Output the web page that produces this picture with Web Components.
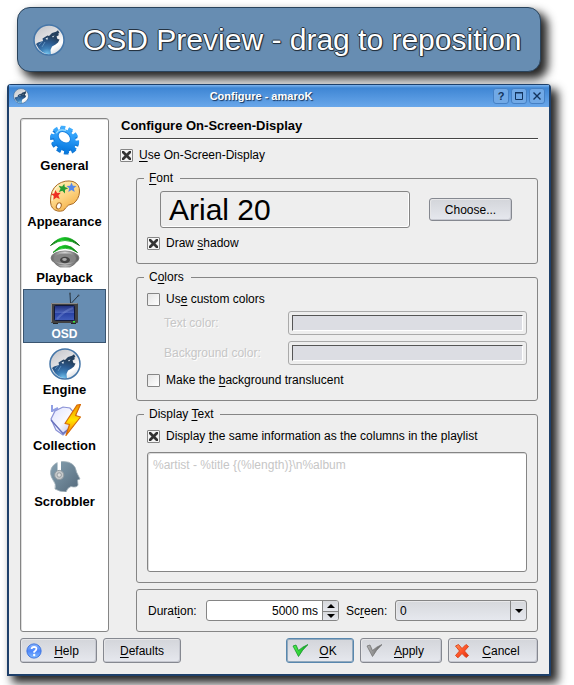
<!DOCTYPE html>
<html lang="en">
<head>
<meta charset="utf-8">
<title>Configure - amaroK</title>
<style>
  body { margin: 0; background: #fff; color: #000; font: 12px/16px "Liberation Sans", Arial, sans-serif; }
</style>
</head>
<body>
<osd-app></osd-app>
<script>
const define = (name, html, setup) => {
  const template = document.createElement('template');
  template.innerHTML = html;
  customElements.define(name, class extends HTMLElement {
    constructor() {
      super();
      this.attachShadow({ mode: 'open' }).append(template.content.cloneNode(true));
    }
    connectedCallback() { if (setup) setup(this, this.shadowRoot); }
  });
};

const star = 'M0-5 1.4-1.8 5-1.6 2.3.8 3.2 4.4 0 2.4-3.2 4.4-2.3.8-5-1.6-1.4-1.8Z';
const check = (a, b, c) => `<defs><linearGradient id="c" x1="0" x2="1"><stop stop-color="${a}"/><stop offset="1" stop-color="${b}"/></linearGradient></defs>
  <path d="M1 3 4 2 6.5 7.5 Q10 4 16 1.5 Q10 7 6.5 13.5 Z" fill="url(#c)" stroke="${c}" stroke-width=".8" stroke-linejoin="round"/>`;
const icons = {
  wolf: `<defs>
      <linearGradient id="a" x1=".2" y1="0" x2=".8" y2="1"><stop stop-color="#c4c6cb"/><stop offset=".5" stop-color="#e6e6e8"/><stop offset=".75" stop-color="#fff"/><stop offset="1" stop-color="#cfd3da"/></linearGradient>
      <radialGradient id="b" gradientUnits="userSpaceOnUse" cx="14" cy="31" r="19"><stop stop-color="#7fd0f8"/><stop offset=".35" stop-color="#3e80b8"/><stop offset=".65" stop-color="#2c5c92"/><stop offset="1" stop-color="#24405e"/></radialGradient></defs>
    <circle cx="16" cy="16" r="15" fill="url(#a)"/>
    <path d="M3 20 5 18.5 10 17 9.5 14.5 12 13 14.5 11.5 16 12 19 9 23 7.8 25 6.2 26.5 9 25 9.8 26 11 23.5 12.5 24.5 15 26.5 15.5 25 18.5 22.5 20.5 19 22.5 17.5 26 18 30.5 Q8 31 3 20Z" fill="url(#b)"/>
    <path d="M12.5 14.5 15 13.4 14.2 16Z M19 12.5 21.5 11.5 20 13.5Z" fill="#e8f2fa"/>
    <path d="M9 17.5 6 21 M12 18 9 23" stroke="#6a9cc8" stroke-width=".8"/>
    <circle cx="16" cy="16" r="15" fill="none" stroke="#4576a8" stroke-width="1.5"/>`,
  gear: `<defs><linearGradient id="a" x1="0" y1="0" x2=".7" y2="1"><stop stop-color="#49b4ff"/><stop offset=".5" stop-color="#2b9cf8"/><stop offset="1" stop-color="#087ae0"/></linearGradient></defs>
    <g transform="rotate(38 16 16)" fill="none"><ellipse cx="16" cy="17" rx="13.200" ry="10.700" stroke="#1378d4" stroke-width="4" stroke-linejoin="round" pathLength="100" stroke-dasharray="5.800 4.200"/>
    <ellipse cx="16" cy="17" rx="12" ry="9.500" fill="#1076d6"/>
    <ellipse cx="15.500" cy="15.600" rx="13.200" ry="10.700" stroke="url(#a)" stroke-width="4" pathLength="100" stroke-dasharray="5.800 4.200"/>
    <ellipse cx="15.500" cy="15.600" rx="11.800" ry="9.300" fill="url(#a)"/>
    <ellipse cx="13.800" cy="14.300" rx="6.800" ry="4.900" fill="#fff" stroke="#1680e0"/>
    <path d="M5 16 A9 7 0 0 1 11 8.2" stroke="#9adcff" stroke-width="1.200"/></g>`,
  palette: `<defs><linearGradient id="a" x1=".2" y1="0" x2=".8" y2="1"><stop stop-color="#fff0b4"/><stop offset=".5" stop-color="#fdd483"/><stop offset="1" stop-color="#f3aa3c"/></linearGradient></defs>
    <path d="M1.5 22 Q1 10 8.5 4.5 Q16 -.5 24 1.5 Q31 4 30.5 12 Q30 19 24.5 23.5 Q18.5 24.5 16.5 28 Q15 32 8.5 31 Q2 29.5 1.5 22Z" fill="url(#a)" stroke="#a86c28"/>
    <path d="M3 21 Q3 10 10 5.5" fill="none" stroke="#fff8dc"/>
    <ellipse cx="9.8" cy="26" rx="2.3" ry="3.2" transform="rotate(25 10 26)" fill="#fff" stroke="#a86c28"/>
    <path d="${star}" transform="translate(7 15) rotate(-8)" fill="#ee3024"/>
    <path d="${star}" transform="translate(14 8.5) rotate(15)" fill="#289a32"/>
    <path d="${star}" transform="translate(22.5 7.5)" fill="#5588ea"/>`,
  speaker: `<defs><linearGradient id="a" x1="0" x2="1"><stop stop-color="#666"/><stop offset=".5" stop-color="#d5d5d5"/><stop offset="1" stop-color="#555"/></linearGradient>
      <linearGradient id="b" x1="0" x2="1"><stop stop-color="#005c00"/><stop offset=".35" stop-color="#18c828"/><stop offset=".75" stop-color="#109c18"/><stop offset="1" stop-color="#004c00"/></linearGradient></defs>
    <path d="M1.500 9.500 Q16 -6.500 30.500 9.500 Q16 -.5 1.500 9.500Z M4 16.500 Q16 2 28.500 16.500 Q16 8 4 16.500Z" fill="url(#b)" stroke="url(#b)" stroke-width=".8"/>
    <path d="M4 24 Q6 29 11 31 H21 Q26 29 28.500 24Z" fill="url(#a)" stroke="#555" stroke-width=".6"/>
    <ellipse cx="16" cy="22" rx="14" ry="7" fill="url(#a)" stroke="#777" stroke-width=".8"/>
    <ellipse cx="16" cy="22.500" rx="11" ry="5" fill="#868686"/>
    <ellipse cx="16" cy="24" rx="5" ry="3.300" fill="#444"/><ellipse cx="15.500" cy="23.500" rx="2.300" ry="1.400" fill="#aaa"/>`,
  tv: `<defs><linearGradient id="a" x1="0" y1="0" x2="0" y2="1"><stop stop-color="#1c2c78"/><stop offset=".48" stop-color="#4a62ba"/><stop offset=".5" stop-color="#2942a4"/><stop offset="1" stop-color="#425ebc"/></linearGradient></defs>
    <path d="M21.500 11 21 2 M22.500 11 29 4" stroke="#26333f"/><circle cx="21" cy="1.500" r="1" fill="#40505e"/><circle cx="29.500" cy="3.500" r="1" fill="#40505e"/>
    <path d="M4 30H9V32H4ZM22 30H27V32H22Z" fill="#222"/>
    <rect x="2" y="11" width="27" height="20" rx="1" fill="#414141"/><path d="M2.500 30V11.500H28.500" fill="none" stroke="#8c8c8c"/>
    <rect x="5.500" y="13.500" width="20" height="15" rx="1" fill="url(#a)" stroke="#10183c"/>
    <path d="M8 27 Q15 19 24 16" stroke="#96a8e6" stroke-opacity=".3" stroke-width="2"/>
    <rect x="24" y="29" width="2" height="1.500" fill="#38f038"/>`,
  collection: `<defs><linearGradient id="a" x1="0" y1="0" x2="1" y2="1"><stop stop-color="#dfe3ff"/><stop offset=".5" stop-color="#f8f8ff"/><stop offset="1" stop-color="#aab0e8"/></linearGradient>
      <linearGradient id="b" x1="0" y1="0" x2="0" y2="1"><stop stop-color="#f09000"/><stop offset=".5" stop-color="#ffe400"/><stop offset="1" stop-color="#ff7000"/></linearGradient></defs>
    <path d="M3 1 V8 M3 7 L9 4" stroke="#91a0e4" stroke-width="2"/>
    <path d="M2 15 6 7 14 3 21 4 27 11 24 22 14 31 7 26Z" fill="url(#a)" stroke="#8a92d6" stroke-width="1.200"/>
    <path d="M2 16 14 29.500 22 23" fill="none" stroke="#6871bc" stroke-width="1.400"/>
    <path d="M28 1 31.500 .500 26.500 11.500 31.500 13 17 31.500 20.500 20.500 16 19.500Z" fill="url(#b)" stroke="#d66a08" stroke-width="1.200" stroke-linejoin="round"/>`,
  head: `<defs><linearGradient id="a" x1="0" y1="0" x2="1" y2="1"><stop stop-color="#87a2b2"/><stop offset="1" stop-color="#53687a"/></linearGradient></defs>
    <path d="M6 29 Q7.500 24 4 20 Q0 14 2.500 8 Q6 1.500 14 1.500 Q26 1.500 27.500 12 L31 19 28.500 20 29 25 Q28 28 22 26.500 Q18.500 27.500 17 32 Q11 32 6 29Z" fill="url(#a)" stroke="#a0aeb8" stroke-width=".8"/>
    <path d="M8.500 0H12V12H8.500Z" fill="#fff"/><circle cx="10.200" cy="15" r="4.600" fill="#c5c9cb" stroke="#929ca2"/><circle cx="10.200" cy="15" r="2.200" fill="#dedede" stroke="#969c9f"/>`,
  help: `<defs><linearGradient id="a" x1="0" y1="0" x2="0" y2="1"><stop stop-color="#8bb6ff"/><stop offset=".5" stop-color="#4d86fa"/><stop offset="1" stop-color="#85bdff"/></linearGradient></defs>
    <circle cx="8" cy="8" r="7.100" fill="url(#a)" stroke="#3c74e0"/><path d="M5.600 6 Q5.800 3.800 8.100 3.800 Q10.500 3.900 10.400 6 Q10.300 7.300 8.200 8.700 V9.800" fill="none" stroke="#fff" stroke-width="1.800"/><circle cx="8.200" cy="12" r="1.200" fill="#fff"/>`,
  ok: check('#4cf04c', '#08a81c', '#15942a'),
  apply: check('#b4b4b4', '#606060', '#767676'),
  cancel: `<defs><linearGradient id="a" x1="0" y1="0" x2="1" y2="1"><stop stop-color="#ff9256"/><stop offset=".5" stop-color="#ff5428"/><stop offset="1" stop-color="#e03010"/></linearGradient></defs>
    <path d="M1.500 3 4.500 1.500 8 5.500 12 1.500 14.500 3.500 10.500 8 14.500 12.500 12 14.500 8 10.500 4 14.800 1.500 12.500 5.500 8Z" fill="url(#a)" stroke="#d84018" stroke-width=".9" stroke-linejoin="round"/>`
};
define('k-icon', `<style>:host{display:block;flex:none;width:32px;height:32px}:host([small]){width:16px;height:16px}svg{display:block;width:100%;height:100%}</style>`, (el, root) => {
  const name = el.getAttribute('name');
  const size = ['help', 'ok', 'apply', 'cancel'].includes(name) ? 16 : 32;
  root.innerHTML += `<svg viewBox="0 0 ${size} ${size}" fill="none" aria-hidden="true">${icons[name]}</svg>`;
});

define('osd-banner', `<style>
  :host{display:flex;align-items:center;gap:18px;margin:7px 33px 12px 17px;padding:15px;border:1px solid #29435c;border-radius:13px;background:#678db2;
    box-shadow:6px 6px 10px 1px rgba(0,0,0,.85);font-size:30px;line-height:33px;color:#fff;white-space:nowrap;
    text-shadow:-1px 0 #253240,1px 0 #253240,0 -1px #253240,0 1px #253240,1px 1px 1px #253240}
</style><k-icon name="wolf"></k-icon><span><slot></slot></span>`);

define('k-window', `<style>
  :host{display:block;margin:0 23px 9px 7px;border:2px solid #1e406a;border-top-width:1px;border-radius:4px 4px 0 0;background:#eee;box-shadow:6px 6px 10px 1px rgba(0,0,0,.85)}
  header{display:flex;align-items:center;gap:2px;padding:3px 4px;background:linear-gradient(#7db4ee,#3f86d4 3px,#69a7ea)}
  h1{flex:1;margin:0;text-align:center;color:#fff;font-size:11px;line-height:16px;text-shadow:1px 1px 1px #16335a}
  button{width:16px;height:16px;padding:0;border:1px solid #4580c4;border-radius:3px;background:#71a9e6;display:grid;place-items:center;color:#12335c;font:bold 11px/12px "Liberation Sans",sans-serif}
  svg{width:10px;height:10px;display:block}
</style><header><k-icon name="wolf" small></k-icon><h1><slot name="title"></slot></h1>
<button aria-label="What's this">?</button>
<button aria-label="Maximize"><svg viewBox="0 0 10 10"><path d="M1.500 2H8.500V8.500H1.500Z" fill="none" stroke="#12335c"/><path d="M1 1.500H9" stroke="#12335c"/></svg></button>
<button aria-label="Close"><svg viewBox="0 0 10 10"><path d="M1.500 1.500 8.500 8.500M8.500 1.500 1.500 8.500" stroke="#12335c" stroke-width="1.400"/></svg></button></header><slot></slot>`);

define('k-nav', `<style>
  :host{display:flex;flex-direction:column;gap:2px;box-sizing:border-box;width:89px;padding:2px;border:1px solid #858585;border-radius:3px;background:#fff;box-shadow:inset 1px 1px #ddd}
</style><slot></slot>`, el => el.setAttribute('role', 'navigation'));
define('k-nav-item', `<style>
  :host{display:block}
  a{display:flex;flex-direction:column;align-items:center;box-sizing:border-box;height:54px;padding-top:2px;border:1px solid transparent;color:#000;text-decoration:none;font-weight:bold;font-size:13px;line-height:20px}
  :host([current]) a{background:#678db2;border-color:#3a5570;color:#fff;font-size:12px}
</style><a href="#"><k-icon></k-icon><span><slot></slot></span></a>`, (el, root) => {
  const old = root.querySelector('k-icon'), icon = document.createElement('k-icon');
  icon.setAttribute('name', el.getAttribute('icon'));
  old.replaceWith(icon);
  if (el.hasAttribute('current')) root.querySelector('a').setAttribute('aria-current', 'page');
});

define('k-check', `<style>
  :host{display:block}
  label{display:flex;align-items:center;gap:6px;line-height:16px}
  input{appearance:none;flex:none;box-sizing:border-box;width:13px;height:13px;margin:0;padding:1px;border:1px solid #858585;border-radius:1px;background:linear-gradient(135deg,#e4e4e4,#fff)}
  input:checked{background:linear-gradient(45deg,transparent 38%,#333 40% 60%,transparent 62%) content-box,linear-gradient(-45deg,transparent 38%,#333 40% 60%,transparent 62%) content-box,#f4f4f4}
</style><label><input type="checkbox"><span><slot></slot></span></label>`, (el, root) => { root.querySelector('input').checked = el.hasAttribute('checked'); });

define('k-group', `<style>
  :host{display:block}
  fieldset{min-width:0;margin:0;padding:0 10px 10px;border:1px solid #858585;border-radius:3px}
  legend{margin-left:-3px;padding:0 7px 0 5px;line-height:16px}
  :host([plain]) fieldset{padding:10px}
</style><fieldset><slot></slot></fieldset>`, (el, root) => {
  if (el.hasAttribute('plain')) return;
  const legend = document.createElement('legend');
  legend.innerHTML = '<slot name="legend"></slot>';
  root.querySelector('fieldset').prepend(legend);
});

define('k-button', `<style>
  :host{display:block}
  button{display:flex;align-items:center;box-sizing:border-box;width:100%;height:25px;padding:0 5px;border:1px solid #858890;border-radius:3px;background:linear-gradient(#d3d5da,#e6e8ee);box-shadow:inset 1px 1px #e6e6e8,inset -1px -1px #c6c8d0;color:#000;font:inherit}
  :host([short]) button{height:23px}
  :host([default]) button{border-color:#5887ae;box-shadow:inset 0 0 0 1px #91a9bd}
  span{flex:1;text-align:center}
</style><button type="button"><slot name="icon"></slot><span><slot></slot></span></button>`);

define('k-color', `<style>
  :host{display:block}
  .row{display:grid;grid-template-columns:1fr 239px;align-items:center;color:#c6c6c6;text-shadow:1px 1px #fff}
  button{box-sizing:border-box;width:100%;height:24px;padding:3px;border:1px solid #aaa;border-radius:3px;background:#eee;display:flex}
  i{flex:1;align-self:stretch;border:1px solid;border-color:#555 #fff #fff #555;background:#dcdde3}
</style><div class="row"><label for="swatch"><slot></slot></label><button id="swatch" type="button" disabled><i></i></button></div>`);

define('k-text', `<style>
  :host{display:block}
  textarea{display:block;box-sizing:border-box;width:100%;height:120px;padding:4px 5px;resize:none;border:1px solid #858585;border-radius:3px;background:#fff;color:#c6c6c6;box-shadow:inset 1px 1px #ddd;font:inherit}
</style><textarea disabled aria-label="Display text"></textarea>`, (el, root) => { root.querySelector('textarea').value = el.getAttribute('value'); });

define('k-spin', `<style>
  :host{display:flex;align-items:center;flex:1}
  label{flex:none;width:58px}
  .box{display:flex;flex:1;box-sizing:border-box;height:21px;border:1px solid #858585;border-radius:3px;background:#fff;overflow:hidden}
  input{flex:1;min-width:0;width:0;border:0;padding:0 4px;background:none;text-align:right;font:inherit;color:#000}
  .steps{display:grid;grid-template-rows:1fr 1fr;width:15px;border-left:1px solid #858585}
  button{display:grid;place-items:center;min-height:0;padding:0;border:0;background:linear-gradient(#d6d8dc,#e6e8ee)}
  button + button{border-top:1px solid #858585}
  svg{display:block;width:8px;height:4px}
</style><label for="value"><slot></slot></label><div class="box"><input id="value" type="text" value="5000 ms"><div class="steps">
<button type="button" aria-label="Increase"><svg viewBox="0 0 8 4"><path d="M0 4 4 0 8 4Z"/></svg></button><button type="button" aria-label="Decrease"><svg viewBox="0 0 8 4"><path d="M0 0H8L4 4Z"/></svg></button></div></div>`);

define('k-select', `<style>
  :host{display:flex;align-items:center;flex:1}
  label{flex:none;width:49px}
  .box{display:grid;flex:1;grid-template-columns:1fr 16px;box-sizing:border-box;height:21px;border:1px solid #858585;border-radius:3px;background:linear-gradient(#d6d8dc,#e6e8ee);box-shadow:inset 1px 1px #e8e8ea}
  select{appearance:none;grid-area:1/1/2/3;min-width:0;border:0;padding:0 4px;background:none;font:inherit;color:#000}
  span{grid-area:1/2;display:grid;place-items:center;border-left:1px solid #858585;pointer-events:none}
  svg{display:block;width:8px;height:4px}
</style><label for="value"><slot></slot></label><div class="box"><select id="value"><option>0</option></select><span><svg viewBox="0 0 8 4"><path d="M0 0H8L4 4Z"/></svg></span></div>`);

define('osd-app', `<style>
  :host{display:block}
  u{text-underline-offset:2px;text-decoration-thickness:1px}
  .panes{display:grid;grid-template-columns:auto 1fr;gap:11px;padding:11px 11px 6px}
  h2{margin:0;padding:0 0 5px 1px;font-size:13px;line-height:15px;border-bottom:1px solid #444;box-shadow:0 1px #fff}
  .use{margin-top:8px}
  .groups{display:grid;gap:5px;margin:7px 0 0 16px}
  .font{display:grid;grid-template-columns:1fr 83px;gap:19px;align-items:center;padding:5px 15px 7px 13px}
  .sample{box-sizing:border-box;height:37px;padding-left:8px;border:1px solid #858585;border-radius:3px;box-shadow:inset -1px -1px #fff;font-size:30px;line-height:35px;white-space:nowrap}
  .last{padding-bottom:2px}
  .colors{display:grid;gap:6px;padding:4px 0 7px 17px}
  .shown{padding:6px 0 8px}
  .opening{padding-top:6px}
  .extra{margin-top:1px}
  .timing{display:grid;grid-template-columns:191px 1fr;gap:7px;padding-left:1px}
  .actions{display:flex;gap:6px;padding:0 11px 11px}
  .help{width:77px}.defaults{width:78px}.ok{width:68px;margin-left:auto}.apply{width:82px}.cancel{width:90px}
</style>
<osd-banner>OSD Preview - drag to reposition</osd-banner>
<k-window><span slot="title">Configure - amaroK</span>
  <div class="panes">
    <k-nav>
      <k-nav-item icon="gear">General</k-nav-item><k-nav-item icon="palette">Appearance</k-nav-item><k-nav-item icon="speaker">Playback</k-nav-item>
      <k-nav-item icon="tv" current>OSD</k-nav-item><k-nav-item icon="wolf">Engine</k-nav-item><k-nav-item icon="collection">Collection</k-nav-item><k-nav-item icon="head">Scrobbler</k-nav-item>
    </k-nav>
    <main>
      <h2>Configure On-Screen-Display</h2>
      <k-check class="use" checked><u>U</u>se On-Screen-Display</k-check>
      <div class="groups">
        <k-group><span slot="legend"><u>F</u>ont</span>
          <div class="font"><div class="sample">Arial 20</div><k-button short>Choose...</k-button></div>
          <k-check class="last" checked>Draw <u>s</u>hadow</k-check>
        </k-group>
        <k-group><span slot="legend">C<u>o</u>lors</span>
          <k-check class="opening">Us<u>e</u> custom colors</k-check>
          <div class="colors"><k-color>Text color:</k-color><k-color>Background color:</k-color></div>
          <k-check class="last">Make the <u>b</u>ackground translucent</k-check>
        </k-group>
        <k-group><span slot="legend">Display <u>T</u>ext</span>
          <k-check class="shown" checked>Display <u>t</u>he same information as the columns in the playlist</k-check>
          <k-text value="%artist - %title {(%length)}\\n%album"></k-text>
        </k-group>
        <k-group class="extra" plain><div class="timing"><k-spin>Durat<u>i</u>on:</k-spin><k-select>Sc<u>r</u>een:</k-select></div></k-group>
      </div>
    </main>
  </div>
  <div class="actions">
    <k-button class="help"><k-icon slot="icon" name="help" small></k-icon><u>H</u>elp</k-button>
    <k-button class="defaults"><u>D</u>efaults</k-button>
    <k-button class="ok" default><k-icon slot="icon" name="ok" small></k-icon><u>O</u>K</k-button>
    <k-button class="apply"><k-icon slot="icon" name="apply" small></k-icon><u>A</u>pply</k-button>
    <k-button class="cancel"><k-icon slot="icon" name="cancel" small></k-icon><u>C</u>ancel</k-button>
  </div>
</k-window>`);
</script>
</body>
</html>
